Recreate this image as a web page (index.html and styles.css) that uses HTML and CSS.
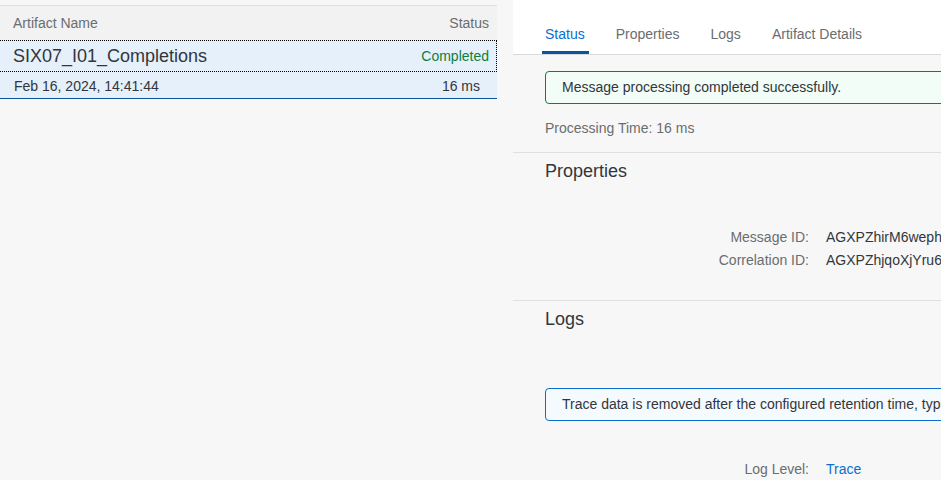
FILE: index.html
```html
<!DOCTYPE html>
<html>
<head>
<meta charset="utf-8">
<link rel="stylesheet" href="styles.css">
</head>
<body>
<div class="page">
  <div class="left">
    <div class="list-head">
      <span>Artifact Name</span>
      <span>Status</span>
    </div>
    <div class="item">
      <div class="item-top">
        <span class="item-name">SIX07_I01_Completions</span>
        <span class="item-status">Completed</span>
      </div>
      <div class="item-bottom">
        <span>Feb 16, 2024, 14:41:44</span>
        <span class="item-time">16 ms</span>
      </div>
    </div>
  </div>
  <div class="right">
    <div class="tabs">
      <div class="tab active">Status</div>
      <div class="tab">Properties</div>
      <div class="tab">Logs</div>
      <div class="tab">Artifact Details</div>
    </div>
    <div class="section status-sec">
      <div class="strip success">Message processing completed successfully.</div>
      <div class="proc-time">Processing Time: 16 ms</div>
    </div>
    <div class="section props-sec">
      <div class="sec-title">Properties</div>
      <div class="form">
        <div class="row"><span class="lbl">Message ID:</span><span class="val">AGXPZhirM6wephWxkQ3yFDUYbqJh</span></div>
        <div class="row"><span class="lbl">Correlation ID:</span><span class="val">AGXPZhjqoXjYru6Cq8Fw2TrKZaLm</span></div>
      </div>
    </div>
    <div class="section logs-sec">
      <div class="sec-title">Logs</div>
      <div class="strip info">Trace data is removed after the configured retention time, typically after one hour.</div>
      <div class="form log-form">
        <div class="row"><span class="lbl">Log Level:</span><span class="val link">Trace</span></div>
      </div>
    </div>
  </div>
</div>
</body>
</html>
```
FILE: styles.css
```css
*, *::before, *::after {
  box-sizing: border-box;
}
html, body {
  margin: 0;
  padding: 0;
  background: #f7f7f7;
  overflow: hidden;
}
body {
  font-family: "Liberation Sans", Arial, sans-serif;
  font-size: 14px;
  line-height: 16px;
  color: #32363a;
  width: 941px;
  height: 480px;
}
.page {
  display: flex;
  gap: 16px;
  height: 480px;
  overflow: hidden;
}
.left {
  width: 497px;
  flex: none;
  padding-top: 5px;
}
.list-head {
  display: flex;
  justify-content: space-between;
  align-items: center;
  height: 35px;
  border-top: 1px solid #e0e0e0;
  background: #f2f2f2;
  padding: 0 8px 0 13px;
  color: #6a6d70;
}
.item {
  background: #e5f0fa;
  border-bottom: 1px solid #0854a0;
}
.item-top {
  display: flex;
  justify-content: space-between;
  align-items: center;
  height: 32px;
  border-top: 1px dotted #000;
  border-bottom: 1px dotted #000;
  border-right: 1px dotted #000;
  padding: 0 7px 0 13px;
}
.item-name {
  font-size: 18px;
  line-height: 22px;
  color: #32363a;
}
.item-status {
  color: #107e3e;
}
.item-bottom {
  display: flex;
  justify-content: space-between;
  align-items: center;
  height: 26px;
  padding: 2px 17px 0 14px;
  color: #32363a;
}
.right {
  width: 800px;
  flex: none;
}
.tabs {
  display: flex;
  background: #fff;
  height: 55px;
  border-bottom: 1px solid #d9d9d9;
  padding-left: 29px;
}
.tab {
  padding: 26px 4px 0 3px;
  margin-right: 24px;
  color: #6a6d70;
  height: 54px;
}
.tab.active {
  color: #0a6ed1;
  border-bottom: 3px solid #0854a0;
}
.section {
  padding-left: 32px;
}
.status-sec {
  padding-top: 16px;
  height: 98px;
  border-bottom: 1px solid #e0e0e0;
}
.strip {
  height: 33px;
  border-radius: 4px;
  padding-left: 16px;
  line-height: 31px;
  white-space: nowrap;
  overflow: hidden;
}
.strip.success {
  border: 1px solid #107e3e;
  background: #f1fdf6;
}
.strip.info {
  border: 1px solid #0a6ed1;
  background: #f5faff;
}
.proc-time {
  margin-top: 16px;
  color: #6a6d70;
}
.props-sec {
  height: 148px;
  border-bottom: 1px solid #e0e0e0;
}
.sec-title {
  font-size: 18px;
  line-height: 22px;
  padding-top: 7px;
}
.form {
  display: flex;
  flex-direction: column;
}
.props-sec .form {
  margin-top: 43px;
}
.row {
  display: flex;
  height: 23px;
  align-items: center;
  white-space: nowrap;
}
.lbl {
  width: 281px;
  text-align: right;
  padding-right: 17px;
  color: #6a6d70;
  flex: none;
}
.val {
  color: #32363a;
}
.val.link {
  color: #0a6ed1;
}
.logs-sec .strip {
  margin-top: 58px;
}
.log-form {
  margin-top: 36px;
}
```
